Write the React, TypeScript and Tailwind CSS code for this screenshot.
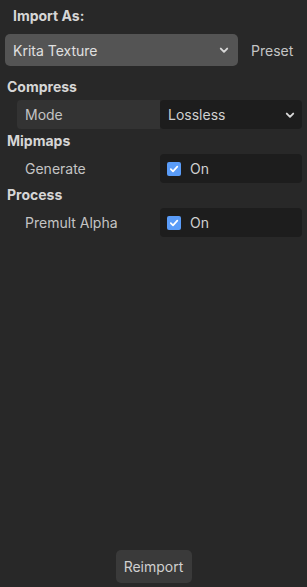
import React from "react";

const Chevron = () => (
  <svg width="12" height="12" viewBox="0 0 12 12" fill="none">
    <path d="M2.8 4.6 L6 7.8 L9.2 4.6" stroke="#d8d8d8" strokeWidth="1.9" strokeLinecap="round" strokeLinejoin="round" />
  </svg>
);

const Check = () => (
  <div className="w-[14px] h-[14px] rounded-[2px] bg-[#5a9cf8] flex items-center justify-center">
    <svg width="10" height="10" viewBox="0 0 10 10" fill="none">
      <path d="M1.8 5.2 L4 7.4 L8.3 2.6" stroke="#ffffff" strokeWidth="1.7" strokeLinecap="round" strokeLinejoin="round" />
    </svg>
  </div>
);

const Header = ({ children }: { children: React.ReactNode }) => (
  <div className="h-[20px] mb-[3px] pl-[7px] flex items-center text-[14px] font-bold text-[#d6d6d6] leading-none">
    {children}
  </div>
);

export default function App() {
  return (
    <div
      className="w-[307px] h-[587px] bg-[#282828] flex flex-col"
      style={{ fontFamily: "Inter, 'Noto Sans', sans-serif" }}
    >
      <div className="h-[20px] mt-[6px] pl-[13px] flex items-center text-[14px] font-bold text-[#d6d6d6] leading-none">
        Import As:
      </div>
      <div className="mt-[8px] flex items-center">
        <div className="ml-[5px] w-[233px] h-[32px] rounded-[5px] bg-[#545454] flex items-center justify-between pl-[8px] pr-[8px]">
          <span className="text-[14px] text-[#e0e0e0]">Krita Texture</span>
          <Chevron />
        </div>
        <span className="ml-[13px] text-[14px] text-[#c4c4c4]">Preset</span>
      </div>

      <div className="mt-[11px]">
        <Header>Compress</Header>
      </div>
      <div className="ml-[17px] w-[285px] h-[29px] flex">
        <div className="w-[143px] bg-[#333333] rounded-l-[4px] flex items-center pl-[8px] text-[14px] text-[#c4c4c4]">
          Mode
        </div>
        <div className="flex-1 bg-[#1d1d1d] rounded-[4px] flex items-center justify-between pl-[8px] pr-[6px] text-[14px] text-[#d0d0d0]">
          <span>Lossless</span>
          <Chevron />
        </div>
      </div>

      <div className="mt-[2px]">
        <Header>Mipmaps</Header>
      </div>
      <div className="ml-[17px] w-[285px] h-[29px] flex">
        <div className="w-[143px] flex items-center pl-[8px] text-[14px] text-[#c4c4c4]">Generate</div>
        <div className="flex-1 bg-[#1d1d1d] rounded-[4px] flex items-center pl-[7px] gap-[9px] text-[14px] text-[#d0d0d0]">
          <Check />
          <span>On</span>
        </div>
      </div>

      <div className="mt-[2px]">
        <Header>Process</Header>
      </div>
      <div className="ml-[17px] w-[285px] h-[29px] flex">
        <div className="w-[143px] flex items-center pl-[8px] text-[14px] text-[#c4c4c4]">Premult Alpha</div>
        <div className="flex-1 bg-[#1d1d1d] rounded-[4px] flex items-center pl-[7px] gap-[9px] text-[14px] text-[#d0d0d0]">
          <Check />
          <span>On</span>
        </div>
      </div>

      <div className="flex-1" />
      <div className="flex justify-center mb-[4px]">
        <div className="w-[76px] h-[33px] rounded-[5px] bg-[#3a3a3a] flex items-center justify-center text-[14px] text-[#d0d0d0]">
          Reimport
        </div>
      </div>
    </div>
  );
}
